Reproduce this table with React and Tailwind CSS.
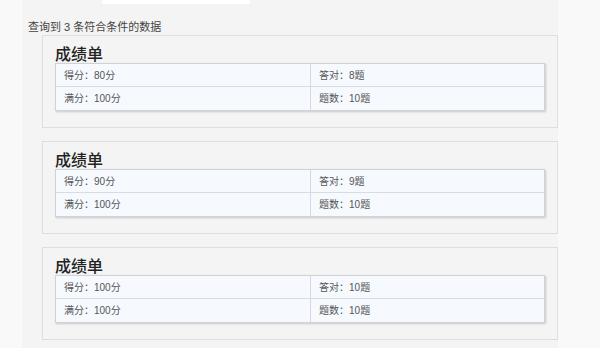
import React from 'react'

const reports = [
  { score: 80, correct: 8, full: 100, total: 10 },
  { score: 90, correct: 9, full: 100, total: 10 },
  { score: 100, correct: 10, full: 100, total: 10 },
]

const font = { fontFamily: '"Liberation Sans", "Noto Sans CJK SC", sans-serif' }

const Cell = ({ children, first }) => (
  <div
    className={`flex items-center pl-[8px] text-[10px] text-[#555] bg-[#f6faff] ${
      first ? 'w-[255px] shrink-0 border-r border-[#d3d9df]' : 'flex-1'
    }`}
  >
    {children}
  </div>
)

const ReportCard = ({ report }) => (
  <div className="border border-[#dedede] bg-[#f4f4f4] pt-[11px] pb-[16px] px-[12px]">
    <h2 className="text-[16px] leading-none font-medium text-[#222]">成绩单</h2>
    <div className="border border-[#cfd3d6] shadow-[1px_1px_2px_rgba(0,0,0,0.18)]">
      <div className="flex h-[23px] border-b border-[#d6dce2]">
        <Cell first>得分：{report.score}分</Cell>
        <Cell>答对：{report.correct}题</Cell>
      </div>
      <div className="flex h-[23px]">
        <Cell first>满分：{report.full}分</Cell>
        <Cell>题数：{report.total}题</Cell>
      </div>
    </div>
  </div>
)

export default function App() {
  return (
    <div className="w-[600px] h-[348px] overflow-hidden bg-[#f9f9f9]" style={font}>
      <div className="ml-[22px] w-[536px] h-full bg-[#f4f4f4]">
        {/* search box edge at the top */}
        <div className="ml-[80px] w-[148px] h-[4px] bg-white" />
        <div className="pl-[6px] pt-[15px] h-[31px] text-[11px] leading-[16px] text-[#444]">
          查询到 3 条符合条件的数据
        </div>
        <div className="ml-[20px] w-[516px] flex flex-col gap-[13px]">
          {reports.map((r, i) => (
            <ReportCard key={i} report={r} />
          ))}
        </div>
      </div>
    </div>
  )
}
